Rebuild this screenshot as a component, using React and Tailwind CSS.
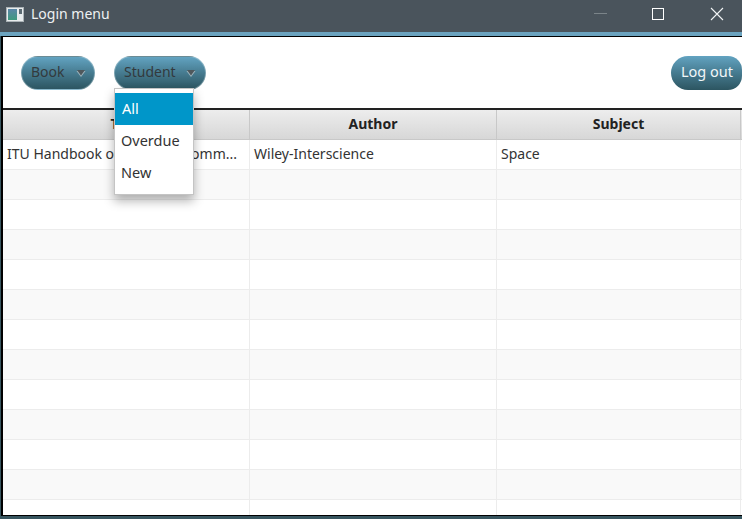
import React from "react";

const font = { fontFamily: '"Noto Sans", "Open Sans", sans-serif' };

function Caret() {
  return (
    <svg width="10" height="7" viewBox="0 0 10 7" className="block mt-[3px]">
      <path d="M0.5 1 H9.5 L5 7 Z" fill="#9db4bd" />
      <path d="M1 0 H9 L5 5.5 Z" fill="#4f585c" />
    </svg>
  );
}

function Menu({ label, w, gap }) {
  return (
    <div
      className={`${w} h-[34px] shrink-0 rounded-[17px] bg-gradient-to-b from-[#62a3c1] to-[#2c5561] border border-[#c9dbe2]/40 flex items-center pl-[9px] pb-[2px] text-[14px] text-[#333a3d] ${gap}`}
    >
      <span>{label}</span>
      <Caret />
    </div>
  );
}

const rows = Array.from({ length: 13 });

export default function App() {
  return (
    <div style={font} className="relative w-[742px] h-[519px] overflow-hidden bg-[#37555f] flex flex-col">
      <div className="h-[32px] shrink-0 bg-[#4a545c] flex items-center text-white">
        <svg width="18" height="15" viewBox="0 0 18 15" className="ml-[6px] mt-[-4px]">
          <defs>
            <linearGradient id="ic" x1="0" y1="0" x2="0" y2="1">
              <stop offset="0" stopColor="#5a86a8" />
              <stop offset="1" stopColor="#3f9a7e" />
            </linearGradient>
          </defs>
          <rect x="0.5" y="0.5" width="17" height="14" fill="#e8eced" stroke="#aab2b6" />
          <rect x="2" y="2" width="9" height="11" fill="url(#ic)" />
          <rect x="13" y="2" width="3" height="5" fill="#5b6a72" />
        </svg>
        <span className="ml-[7px] mt-[-5px] text-[14px] text-[#eef1f2]">Login menu</span>
        <div className="ml-auto flex items-center mt-[-5px]">
          <div className="w-[13px] h-px bg-[#7b8489] mr-[45px]" />
          <div className="w-[12px] h-[12px] border border-white mr-[46px]" />
          <svg width="14" height="14" viewBox="0 0 14 14" className="mr-[18px]">
            <path d="M1 1 L13 13 M13 1 L1 13" stroke="#f2f4f5" strokeWidth="1.1" />
          </svg>
        </div>
      </div>
      <div className="h-[4px] shrink-0 bg-[#6ba3bf]" />
      <div className="flex-1 min-h-0 ml-[1px] mb-[3px] border-l-2 border-t border-b border-black bg-white flex flex-col">
        <div className="h-[71px] shrink-0 flex items-center pl-[18px]">
          <Menu label="Book" w="w-[74px]" gap="gap-[11px]" />
          <div className="w-[19px] shrink-0" />
          <Menu label="Student" w="w-[92px]" gap="gap-[10px]" />
          <div className="ml-auto w-[71px] h-[34px] rounded-l-[17px] rounded-r-[14px] bg-gradient-to-b from-[#62a3c1] to-[#2c5561] flex items-center pl-[10px] pb-[2px] text-[14.5px] text-[#f1f6f8]">
            Log out
          </div>
        </div>
        <div className="h-[2px] shrink-0 bg-[#222]" />
        <div className="flex-1 min-h-0 overflow-hidden text-[14px] text-[#333]">
          <div className="h-[30px] flex font-bold bg-gradient-to-b from-[#ededed] to-[#d7d7d7] border-b border-[#c8c8c8]">
            <div className="w-[247px] shrink-0 border-r border-[#c8c8c8] flex items-center justify-center pb-[2px] text-[#222]">Title</div>
            <div className="w-[247px] shrink-0 border-r border-[#c8c8c8] flex items-center justify-center pb-[2px] text-[#222]">Author</div>
            <div className="w-[244px] shrink-0 border-r border-[#c8c8c8] flex items-center justify-center pb-[2px] text-[#222]">Subject</div>
          </div>
          {rows.map((_, i) => (
            <div key={i} className={`h-[30px] flex border-b border-[#ececec] ${i % 2 ? "bg-[#f9f9f9]" : "bg-white"}`}>
              <div className="w-[247px] shrink-0 border-r border-[#ececec] flex items-center pl-[4px] pb-[2px] whitespace-nowrap overflow-hidden">
                {i === 0 ? "ITU Handbook on Satellite Comm..." : ""}
              </div>
              <div className="w-[247px] shrink-0 border-r border-[#ececec] flex items-center pl-[4px] pb-[2px]">
                {i === 0 ? "Wiley-Interscience" : ""}
              </div>
              <div className="w-[244px] shrink-0 border-r border-[#ececec] flex items-center pl-[4px] pb-[2px]">
                {i === 0 ? "Space" : ""}
              </div>
            </div>
          ))}
        </div>
      </div>
      <div className="absolute left-[114px] top-[88px] w-[80px] h-[107px] bg-white border border-[#c4c4c4] shadow-[0_6px_10px_rgba(0,0,0,0.3)] pt-[4px] text-[14.5px] text-[#333]">
        <div className="h-[32px] bg-[#0096c9] text-white flex items-center pl-[7px]">All</div>
        <div className="h-[32px] flex items-center pl-[6px]">Overdue</div>
        <div className="h-[32px] flex items-center pl-[6px]">New</div>
      </div>
    </div>
  );
}
